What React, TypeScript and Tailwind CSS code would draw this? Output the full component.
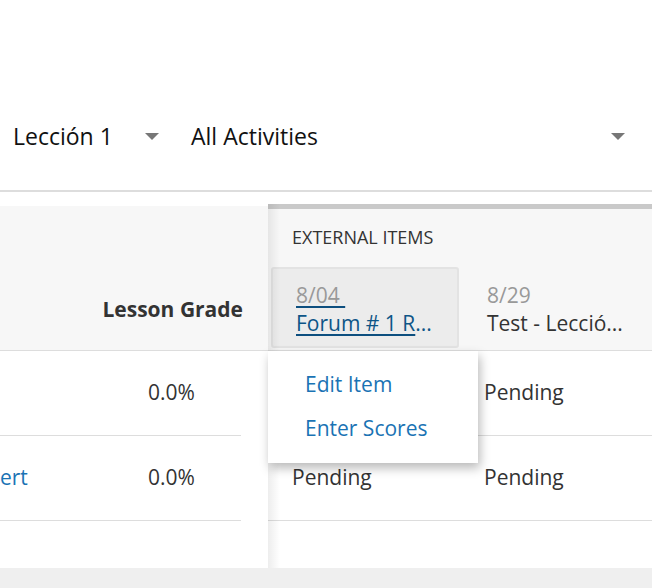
import React from "react";

function Caret() {
  return (
    <span className="inline-block w-0 h-0 border-l-[7px] border-r-[7px] border-t-[7px] border-l-transparent border-r-transparent border-t-[#777]" />
  );
}

const leftRows = [
  { name: "", grade: "0.0%" },
  { name: "ert", grade: "0.0%" },
];

const rightRows = [
  ["", "Pending"],
  ["Pending", "Pending"],
];

export default function App() {
  return (
    <div className="relative w-[652px] h-[588px] overflow-hidden bg-white font-['Open_Sans',sans-serif] text-[#333]">
      {/* filters */}
      <div className="h-[192px] pt-[118px] border-b-2 border-[#dddddd]">
        <div className="flex h-[36px] items-center pl-[13px] pr-[27px] text-[23px] text-[#111]">
          <div className="flex w-[146px] items-center justify-between">
            <span>Lección 1</span>
            <Caret />
          </div>
          <div className="ml-[32px] flex flex-1 items-center justify-between">
            <span>All Activities</span>
            <Caret />
          </div>
        </div>
      </div>

      {/* gradebook */}
      <div className="mt-[12px] flex h-[364px]">
        <div className="w-[268px] pt-[2px]">
          <div className="flex h-[145px] items-end justify-end border-b border-[#dddddd] bg-[#f7f7f7] pr-[25px] pb-[27px]">
            <span className="text-[21px] leading-[28px] font-bold">Lesson Grade</span>
          </div>
          {leftRows.map((r, i) => (
            <div key={i} className="mr-[27px] flex h-[85px] items-center border-b border-[#dddddd] text-[21px]">
              <span className="w-[148px] text-[#1a73b4]">{r.name}</span>
              <span>{r.grade}</span>
            </div>
          ))}
        </div>

        <div className="relative flex-1">
          <div className="h-[5px] bg-[#c9c9c9]" />
          <div className="h-[142px] border-b border-[#dddddd] bg-[#f7f7f7] pt-[16px]">
            <p className="pl-[24px] text-[18px] leading-[24px] uppercase">External Items</p>
            <div className="mt-[18px] flex">
              <div className="w-[194px] pl-[3px]">
                <div className="h-[81px] w-[188px] rounded-[3px] border-2 border-[#e3e3e3] bg-[#ececec] pl-[23px] pt-[12px] text-[21px] leading-[28px]">
                  <div>
                    <span className="text-[#999] underline decoration-[#0d4f7f] decoration-2 underline-offset-[3px]">8/04&nbsp;</span>
                  </div>
                  <div className="whitespace-nowrap">
                    <span className="text-[#0d5587] underline decoration-[#0d4f7f] decoration-2 underline-offset-[3px]">Forum # 1 R</span>
                    <span className="text-[#0d5587]">...</span>
                  </div>
                </div>
              </div>
              <div className="pl-[25px] pt-[14px] text-[21px] leading-[28px]">
                <div className="text-[#999]">8/29</div>
                <div className="whitespace-nowrap">Test - Lecció...</div>
              </div>
            </div>
          </div>
          {rightRows.map((r, i) => (
            <div key={i} className="flex h-[85px] items-center border-b border-[#dddddd] text-[21px]">
              <span className="w-[216px] pl-[24px]">{r[0]}</span>
              <span>{r[1]}</span>
            </div>
          ))}
          <div className="pointer-events-none absolute inset-y-0 left-0 w-[12px] bg-gradient-to-r from-black/[0.07] to-transparent" />

          {/* item menu */}
          <div className="absolute left-0 top-[147px] flex h-[112px] w-[210px] flex-col gap-[16px] bg-white pl-[37px] pt-[19px] text-[21px] leading-[28px] text-[#1a73b4] shadow-[2px_5px_10px_rgba(0,0,0,0.28)]">
            <span>Edit Item</span>
            <span>Enter Scores</span>
          </div>
        </div>
      </div>

      <div className="h-[20px] bg-[#efefef]" />
    </div>
  );
}
